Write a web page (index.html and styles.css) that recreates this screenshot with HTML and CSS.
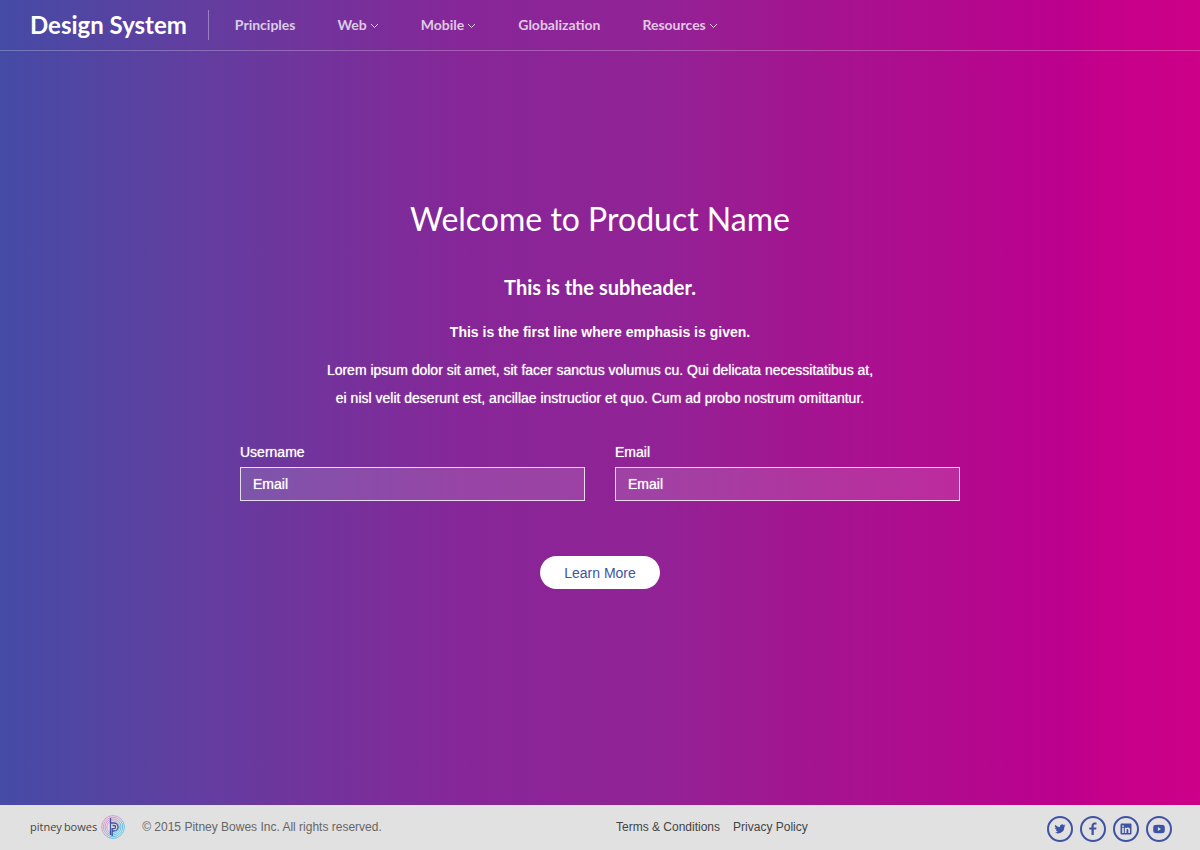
FILE: index.html
```html
<!DOCTYPE html>
<html lang="en">
<head>
<meta charset="utf-8">
<title>Design System</title>
<link rel="stylesheet" href="styles.css">
</head>
<body>
<header class="topbar">
  <a class="brand" href="#">Design System</a>
  <nav class="nav">
    <a href="#">Principles</a>
    <a href="#">Web<svg class="caret" viewBox="0 0 9 6"><path d="M1 1l3.500 3.500L8 1"/></svg></a>
    <a href="#">Mobile<svg class="caret" viewBox="0 0 9 6"><path d="M1 1l3.500 3.500L8 1"/></svg></a>
    <a href="#">Globalization</a>
    <a href="#">Resources<svg class="caret" viewBox="0 0 9 6"><path d="M1 1l3.500 3.500L8 1"/></svg></a>
  </nav>
</header>
<main class="hero">
  <h1>Welcome to Product Name</h1>
  <h2>This is the subheader.</h2>
  <p class="emphasis">This is the first line where emphasis is given.</p>
  <p class="lead">Lorem ipsum dolor sit amet, sit facer sanctus volumus cu. Qui delicata necessitatibus at, ei nisl velit deserunt est, ancillae instructior et quo. Cum ad probo nostrum omittantur.</p>
  <form class="form">
    <div class="fields">
      <div class="field"><label for="username">Username</label><input id="username" type="text" placeholder="Email"></div>
      <div class="field"><label for="email">Email</label><input id="email" type="email" placeholder="Email"></div>
    </div>
    <button class="cta" type="button">Learn More</button>
  </form>
</main>
<footer class="footer">
  <div class="legal">
    <a class="logo" href="#" aria-label="pitney bowes home"><span>pitney</span><span>bowes</span>
      <svg class="mark" viewBox="0 0 24 24">
        <defs><linearGradient id="ring" x1="0" y1="0" x2="1" y2="1"><stop offset="0" stop-color="#f07ab8"/><stop offset=".45" stop-color="#b59ad8"/><stop offset=".7" stop-color="#45b5ea"/><stop offset="1" stop-color="#4fd0f0"/></linearGradient></defs>
        <g fill="none" stroke="url(#ring)" stroke-width=".8"><circle cx="12" cy="12" r="11.400"/><circle cx="12" cy="12" r="9.700"/><circle cx="12" cy="12" r="8"/><circle cx="12" cy="12" r="6.300"/></g>
        <path d="M9.500 3v11.500M9.500 8H13a4 4 0 0 1 0 8h-1.500M11.500 10.500H13a1.600 1.600 0 0 1 0 3.200h-1.800V21M9.500 14.500V20" fill="none" stroke="#3e53a4" stroke-width="1.300"/>
      </svg>
    </a>
    <span class="copy">© 2015 Pitney Bowes Inc. All rights reserved.</span>
  </div>
  <div class="end">
    <nav class="links"><a href="#">Terms &amp; Conditions</a><a href="#">Privacy Policy</a></nav>
    <nav class="social">
      <a href="#" aria-label="Twitter"><svg viewBox="0 0 24 24"><path d="M23 5a9 9 0 0 1-2.600.7 4.500 4.500 0 0 0 2-2.500 9 9 0 0 1-2.900 1.100 4.500 4.500 0 0 0-7.700 4.100A12.800 12.800 0 0 1 2.500 3.700a4.500 4.500 0 0 0 1.400 6 4.500 4.500 0 0 1-2-.6 4.500 4.500 0 0 0 3.600 4.500 4.500 4.500 0 0 1-2 .1 4.500 4.500 0 0 0 4.200 3.100A9 9 0 0 1 1 18.700 12.800 12.800 0 0 0 20.700 7.300 9 9 0 0 0 23 5z"/></svg></a>
      <a href="#" aria-label="Facebook"><svg viewBox="0 0 24 24"><path d="M9 24V13H4.500V9H9V6C9 1.500 11.800-1 15.500-1c1.500 0 2.700.1 3.500.3V3h-2.500c-2.300 0-3 1-3 2.700V9H19l-.7 4h-4.800v11z"/></svg></a>
      <a href="#" aria-label="LinkedIn"><svg viewBox="0 0 24 24"><path fill-rule="evenodd" d="M3 1h18a2 2 0 0 1 2 2v18a2 2 0 0 1-2 2H3a2 2 0 0 1-2-2V3a2 2 0 0 1 2-2zm1.300 8.500V20h3.300V9.500zM6 4.300A1.900 1.900 0 1 0 6 8.100a1.900 1.900 0 0 0 0-3.800zM9.700 9.500V20H13v-5.200c0-1.400.3-2.700 2-2.700s1.700 1.600 1.700 2.800V20H20v-5.800c0-2.800-.6-5-3.900-5-1.600 0-2.600.9-3.100 1.700V9.500z"/></svg></a>
      <a href="#" aria-label="YouTube"><svg viewBox="0 0 24 24"><path fill-rule="evenodd" d="M4 4q8-1 16 0 3 .3 3.400 3.500.5 4.500 0 9Q23 19.700 20 20q-8 1-16 0-3-.3-3.400-3.500-.5-4.500 0-9Q1 4.300 4 4zm5.800 4.200v7.600L16 12z"/></svg></a>
    </nav>
  </div>
</footer>
</body>
</html>
```
FILE: styles.css
```css
* { box-sizing: border-box; }
body {
  margin: 0;
  min-height: 100vh;
  display: flex;
  flex-direction: column;
  background: linear-gradient(to right, #454ba5 0%, #633d9f 17%, #872698 39%, #912396 54%, #a31590 67%, #bd008e 89%, #c6008b 92%, #cd0088 100%);
  color: #fff;
  font: 14px/20px "Liberation Sans", Arial, sans-serif;
}
a { color: inherit; text-decoration: none; }
.topbar {
  display: flex;
  align-items: center;
  height: 51px;
  padding: 0 30px;
  border-bottom: 1px solid rgba(255, 255, 255, .25);
}
.brand {
  padding-right: 21px;
  border-right: 1px solid rgba(255, 255, 255, .35);
  font: bold 24px/30px Lato, sans-serif;
}
.nav {
  display: flex;
  gap: 42px;
  padding-left: 26px;
  color: rgba(255, 255, 255, .75);
  font: bold 14px/20px Lato, sans-serif;
}
.caret {
  width: 9px;
  height: 6px;
  margin: 0 0 1px 3px;
  fill: none;
  stroke: currentColor;
}
.hero {
  flex: 1;
  display: flex;
  flex-direction: column;
  align-items: center;
  padding: 144px 30px 60px;
  text-align: center;
}
h1 { margin: 0; font: 400 32px/48px Lato, sans-serif; }
h2 { margin: 30px 0 0; font: bold 20px/28px Lato, sans-serif; }
.emphasis { margin: 21px 0 0; font-weight: bold; }
.lead { max-width: 560px; margin: 14px 0 0; line-height: 28px; }
.lead, .field { text-shadow: 0 0 1px rgba(255, 255, 255, .8); }
.form { width: 100%; max-width: 720px; margin-top: 30px; }
.fields { display: grid; grid-template-columns: 1fr 1fr; gap: 30px; text-align: left; }
.field label { display: block; margin-bottom: 5px; }
.field input {
  display: block;
  width: 100%;
  height: 34px;
  padding: 6px 12px;
  border: 1px solid rgba(255, 255, 255, .8);
  border-radius: 0;
  background: rgba(255, 255, 255, .14);
  color: #fff;
  font: inherit;
  text-shadow: inherit;
}
.field input::placeholder { color: #fff; opacity: 1; }
.cta {
  margin-top: 55px;
  height: 33px;
  padding: 0 24px;
  border: 0;
  border-radius: 17px;
  background: #fff;
  color: #3e53a4;
  font: inherit;
}
.footer {
  display: grid;
  grid-template-columns: 1fr 1fr;
  gap: 30px;
  height: 45px;
  padding: 0 28px 2px 30px;
  background: #e1e1e1;
  color: #444;
  font-size: 12px;
}
.legal, .logo, .end, .social { display: flex; align-items: center; }
.logo { gap: 2px; margin-right: 17px; font: 11px/20px "Open Sans", sans-serif; }
.mark { width: 24px; height: 24px; margin-left: 2px; }
.copy { color: #666; }
.end { justify-content: space-between; }
.links { display: flex; gap: 13px; }
.social { gap: 7px; padding-top: 4px; }
.social a {
  display: grid;
  place-items: center;
  width: 26px;
  height: 26px;
  border: 2px solid #3e53a4;
  border-radius: 50%;
}
.social svg { width: 12px; height: 12px; fill: #3e53a4; overflow: visible; }
```
